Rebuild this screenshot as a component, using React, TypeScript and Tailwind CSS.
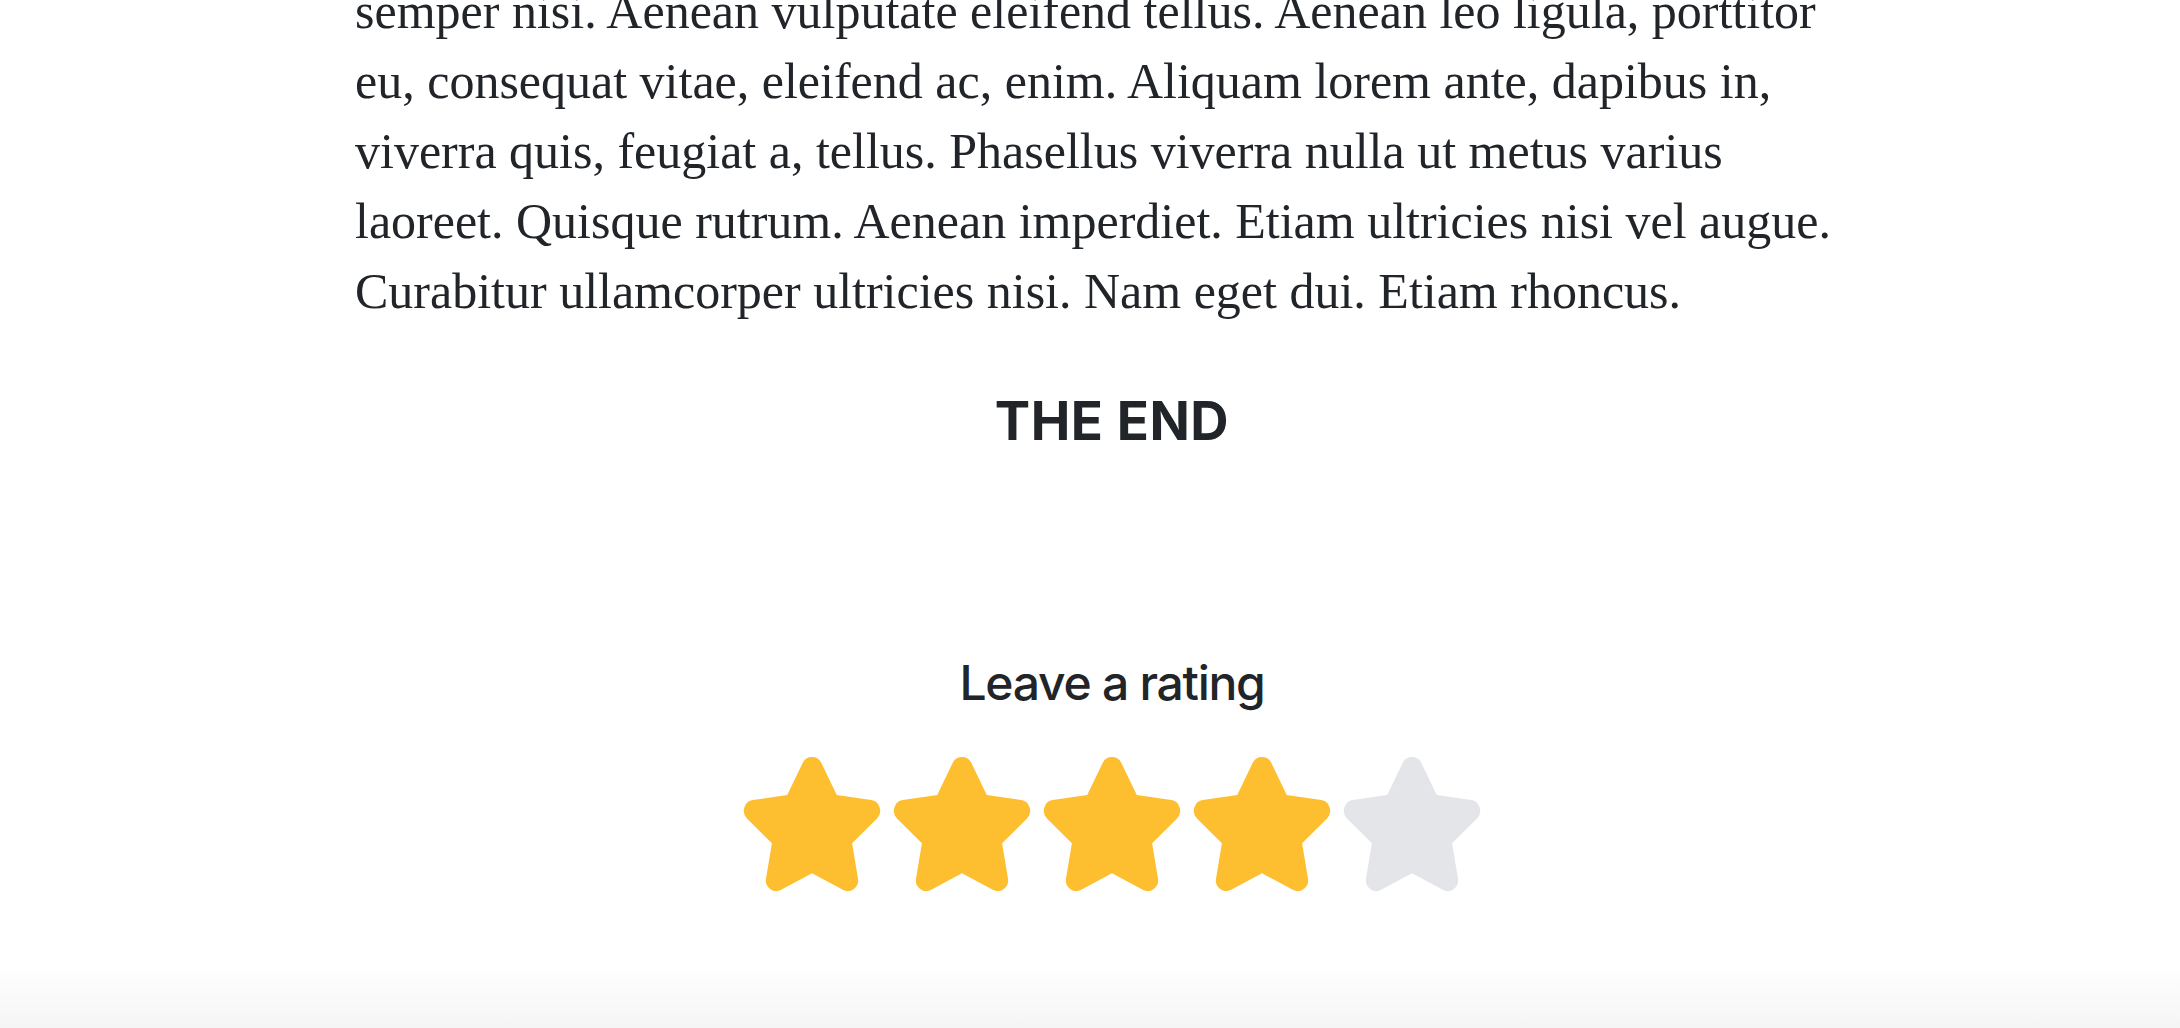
import React from "react";

const lines = [
  "semper nisi. Aenean vulputate eleifend tellus. Aenean leo ligula, porttitor",
  "eu, consequat vitae, eleifend ac, enim. Aliquam lorem ante, dapibus in,",
  "viverra quis, feugiat a, tellus. Phasellus viverra nulla ut metus varius",
  "laoreet. Quisque rutrum. Aenean imperdiet. Etiam ultricies nisi vel augue.",
  "Curabitur ullamcorper ultricies nisi. Nam eget dui. Etiam rhoncus.",
];

const Star = ({ filled }: { filled: boolean }) => {
  return (
    <svg
      viewBox="0 0 22 20"
      preserveAspectRatio="none"
      className={filled ? "w-[150px] h-[140px] text-[#fdbf2f]" : "w-[150px] h-[140px] text-[#e4e5e9]"}
      fill="currentColor"
      aria-hidden="true"
    >
      <path d="M20.924 7.625a1.523 1.523 0 0 0-1.238-1.044l-5.051-.734-2.259-4.577a1.534 1.534 0 0 0-2.752 0L7.365 5.847l-5.051.734A1.535 1.535 0 0 0 1.463 9.2l3.656 3.563-.863 5.031a1.532 1.532 0 0 0 2.226 1.616L11 17.033l4.518 2.375a1.534 1.534 0 0 0 2.226-1.617l-.863-5.03L20.537 9.2a1.523 1.523 0 0 0 .387-1.575Z" />
    </svg>
  );
};

const App = () => {
  const rating = 4;

  return (
    <div className="h-screen overflow-hidden bg-white flex flex-col text-[#212529]">
      <main className="flex-1 pl-[355px] pr-[311px]">
        <p
          className="-mt-[24px] text-[50px] leading-[70px]"
          style={{ fontFamily: '"Liberation Serif", "Times New Roman", serif' }}
        >
          {lines.map((line, i) => (
            <span key={i} className="block whitespace-nowrap">
              {line}
            </span>
          ))}
        </p>

        <h2
          className="mt-[64px] text-center text-[53px] leading-[1.2] font-bold tracking-[0.01em]"
          style={{ fontFamily: 'Inter, "Noto Sans", sans-serif' }}
        >
          THE END
        </h2>

        <section className="mt-[200px] flex flex-col items-center">
          <h3
            className="text-[48px] leading-[1.2] font-medium tracking-[-0.026em]"
            style={{ fontFamily: 'Inter, "Noto Sans", sans-serif' }}
          >
            Leave a rating
          </h3>
          <div className="mt-[43px] flex items-center">
            {[1, 2, 3, 4, 5].map((n) => (
              <Star key={n} filled={n <= rating} />
            ))}
          </div>
        </section>
      </main>
      <div className="h-[64px] bg-gradient-to-b from-white to-[#f5f5f5]" />
    </div>
  );
};

export default App;
